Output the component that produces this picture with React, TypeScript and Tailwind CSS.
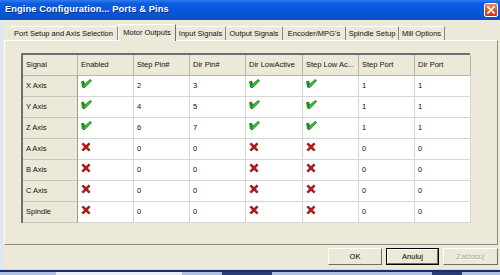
import React from "react";

const Check = () => (
  <svg width="11" height="9" viewBox="0 0 11 9" className="block">
    <polygon points="0.6,2.6 2.8,2.2 3.6,5.4 9.2,0.5 10.6,1.6 3.8,8.6 1.6,8.2" fill="#3cc83c" stroke="#0c650c" strokeWidth="0.8" strokeLinejoin="round" />
    <polygon points="1.4,3 2.6,2.8 3.4,6.4 3.4,7.8 2,7.6" fill="#138a13" />
  </svg>
);

const Cross = () => (
  <svg width="10" height="10" viewBox="0 0 10 10" className="block">
    <path d="M1 2.2 L2.2 1 L5 3.6 L7.8 1 L9 2.2 L6.4 5 L9 7.8 L7.8 9 L5 6.4 L2.2 9 L1 7.8 L3.6 5 Z" fill="#c41616" stroke="#6e0808" strokeWidth="0.8" strokeLinejoin="round" />
  </svg>
);

type Row = { name: string; on: boolean; step: string; dir: string; sp: string; dp: string };
const rows: Row[] = [
  { name: "X Axis", on: true, step: "2", dir: "3", sp: "1", dp: "1" },
  { name: "Y Axis", on: true, step: "4", dir: "5", sp: "1", dp: "1" },
  { name: "Z Axis", on: true, step: "6", dir: "7", sp: "1", dp: "1" },
  { name: "A Axis", on: false, step: "0", dir: "0", sp: "0", dp: "0" },
  { name: "B Axis", on: false, step: "0", dir: "0", sp: "0", dp: "0" },
  { name: "C Axis", on: false, step: "0", dir: "0", sp: "0", dp: "0" },
  { name: "Spindle", on: false, step: "0", dir: "0", sp: "0", dp: "0" },
];

const headers = ["Signal", "Enabled", "Step Pin#", "Dir Pin#", "Dir LowActive", "Step Low Ac...", "Step Port", "Dir Port"];

const tabs: { label: string; w: string; sel?: boolean }[] = [
  { label: "Port Setup and Axis Selection", w: "w-[108px]" },
  { label: "Motor Outputs", w: "w-[58px]", sel: true },
  { label: "Input Signals", w: "w-[50px]" },
  { label: "Output Signals", w: "w-[57px]" },
  { label: "Encoder/MPG's", w: "w-[63px]" },
  { label: "Spindle Setup", w: "w-[53px]" },
  { label: "Mill Options", w: "w-[46px]" },
];

function HeadCell({ text }: { text: string }) {
  return (
    <div className="h-[21px] flex items-center pl-[3px] bg-[#ECE9D8] border-r border-b border-[#b8b5a6] whitespace-nowrap overflow-hidden">
      {text}
    </div>
  );
}

function DataCell({ children }: { children: React.ReactNode }) {
  return (
    <div className="h-[21px] flex items-center pl-[3px] bg-white border-r border-b border-[#d6d6d6]">{children}</div>
  );
}

function IconCell({ on }: { on: boolean }) {
  return (
    <div className="h-[21px] flex items-start pt-[3px] pl-[3px] bg-white border-r border-b border-[#d6d6d6]">
      {on ? <Check /> : <Cross />}
    </div>
  );
}

function Btn({ label, def, dis, w }: { label: string; def?: boolean; dis?: boolean; w: string }) {
  return (
    <div className={"h-[17px] " + w + " " + (def ? "border border-[#000]" : "")}>
      <div className="h-full w-full border-t border-l border-white border-r border-b border-r-[#716f64] border-b-[#716f64] bg-[#ECE9D8] flex items-center justify-center">
        <span className={dis ? "text-[#aca899] [text-shadow:1px_1px_0_#ffffff]" : "text-black"}>{label}</span>
      </div>
    </div>
  );
}

export default function App() {
  return (
    <div className="w-[500px] h-[275px] flex flex-col overflow-hidden bg-[#ECE9D8] text-[7.5px] text-[#111]" style={{ fontFamily: '"Liberation Sans", Arial, sans-serif' }}>
      {/* Title bar */}
      <div className="h-[20px] shrink-0 flex items-center justify-between pl-[5px] pr-[2px] bg-[linear-gradient(to_bottom,#2f7cf0_0%,#0a5ddf_18%,#0757d8_60%,#0a4fcb_100%)]">
        <span className="text-white font-bold text-[9.3px] tracking-[0.1px] [text-shadow:1px_1px_0_#0a2f80]">Engine Configuration... Ports &amp; Pins</span>
        <div className="w-[14px] h-[14px] rounded-[2px] border border-white bg-[linear-gradient(to_bottom,#f08a64,#dc4a22_60%,#c83a14)] flex items-center justify-center">
          <svg width="8" height="8" viewBox="0 0 8 8">
            <path d="M1 1 L7 7 M7 1 L1 7" stroke="#fff" strokeWidth="1.6" strokeLinecap="square" />
          </svg>
        </div>
      </div>

      {/* Body */}
      <div className="flex-1 flex flex-col border-l-[3px] border-l-[#dfe7f6]">
        {/* Tabs */}
        <div className="flex items-end pl-[7px] pt-[3px] h-[20px] shrink-0">
          {tabs.map((t) =>
            t.sel ? (
              <div key={t.label} className={"h-[17px] -mb-[1px] relative z-10 bg-[#ECE9D8] border-t border-l border-white border-r border-r-[#716f64] flex items-start pt-[2px] justify-center whitespace-nowrap " + t.w}>
                {t.label}
              </div>
            ) : (
              <div key={t.label} className={"h-[14px] bg-[#ECE9D8] border-t border-white border-r border-r-[#8a887c] flex items-center justify-center whitespace-nowrap " + t.w}>
                {t.label}
              </div>
            )
          )}
        </div>

        {/* Panel */}
        <div className="ml-[1px] mr-[2px] h-[205px] shrink-0 border-t border-l border-white border-r border-b border-r-[#8d8b80] border-b-[#8d8b80] pl-[16px] pt-[12px]">
          <div className="w-[449px] border-l-2 border-t-2 border-l-[#6e6e6e] border-t-[#6e6e6e] grid grid-cols-[55px_56px_56px_56px_57px_56px_56px_56px]">
            {headers.map((h) => (
              <HeadCell key={h} text={h} />
            ))}
            {rows.map((r) => (
              <React.Fragment key={r.name}>
                <div className="h-[21px] flex items-center pl-[3px] bg-[#ECE9D8] border-r border-b border-r-[#9e9b8c] border-b-[#c9c6b8]">{r.name}</div>
                <IconCell on={r.on} />
                <DataCell>{r.step}</DataCell>
                <DataCell>{r.dir}</DataCell>
                <IconCell on={r.on} />
                <IconCell on={r.on} />
                <DataCell>{r.sp}</DataCell>
                <DataCell>{r.dp}</DataCell>
              </React.Fragment>
            ))}
          </div>
        </div>

        {/* Buttons */}
        <div className="flex justify-end gap-[4px] pr-[2px] pt-[3px]">
          <Btn label="OK" w="w-[54px]" />
          <Btn label="Anuluj" w="w-[53px]" def />
          <Btn label="Zastosuj" w="w-[55px]" dis />
        </div>
      </div>

      {/* Taskbar strip */}
      <div className="h-[6px] shrink-0 border-t border-t-[#c9d6ee] flex flex-col">
        <div className="h-[2px] bg-[#1c2e6a]" />
        <div className="flex-1 bg-[#aebfe3] flex">
          <div className="w-[56px]" />
          <div className="w-[126px] bg-[#e8eef8]" />
          <div className="w-[40px]" />
          <div className="w-[50px] bg-[#2a3c78]" />
          <div className="w-[160px]" />
          <div className="w-[30px] bg-[#2a3c78]" />
        </div>
      </div>
    </div>
  );
}
